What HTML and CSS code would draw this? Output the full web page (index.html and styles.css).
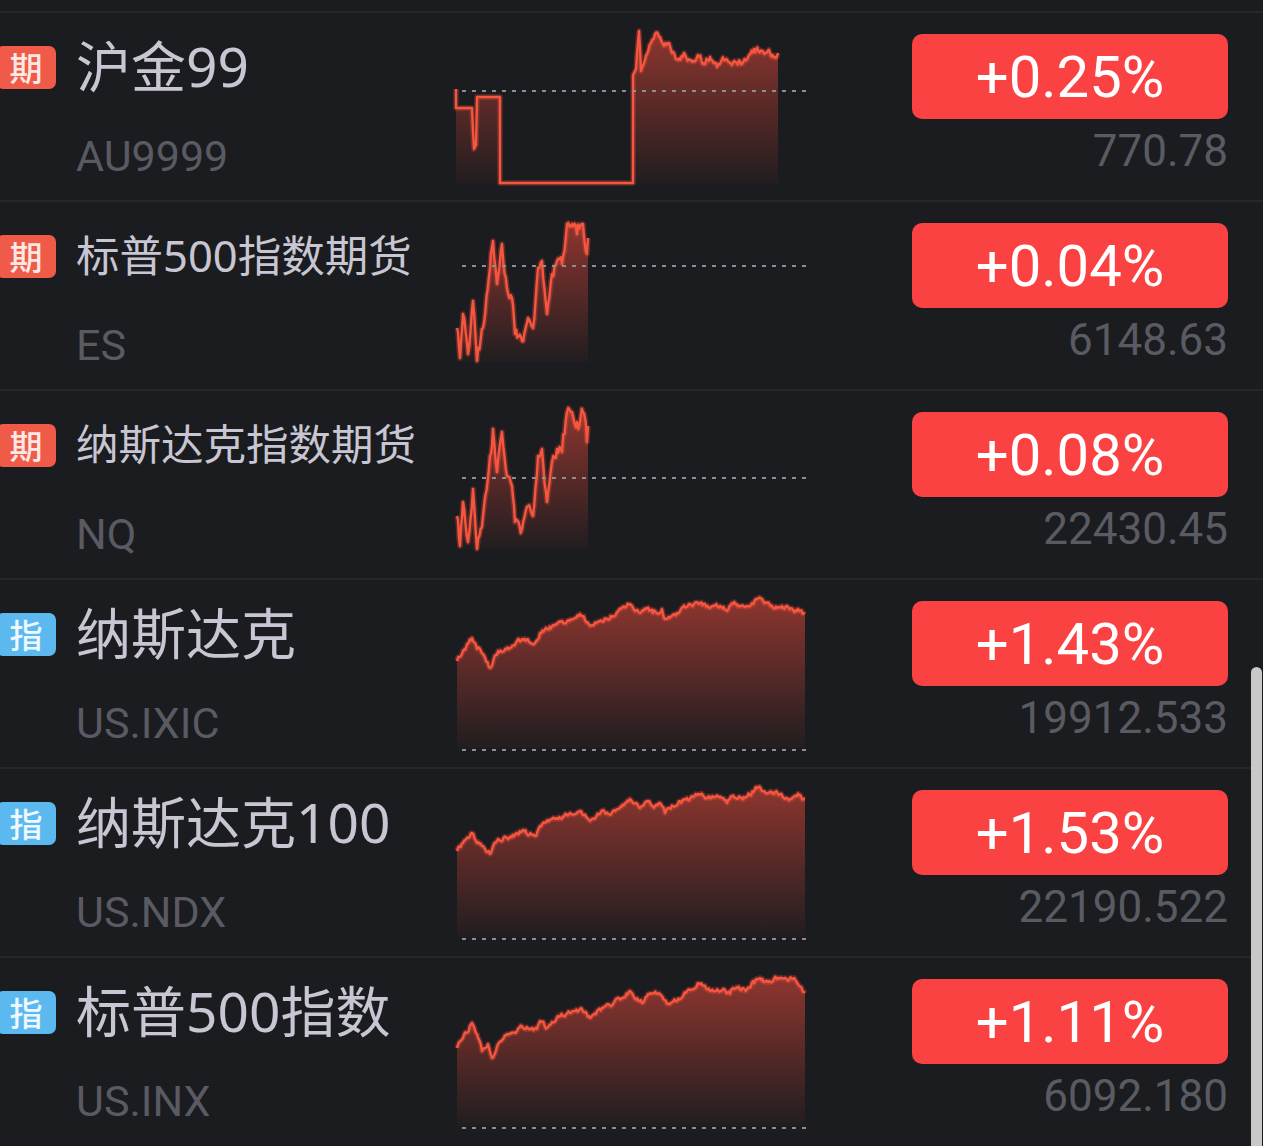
FILE: index.html
```html
<!DOCTYPE html>
<html lang="zh-CN">
<head>
  <meta charset="UTF-8" />
  <meta name="viewport" content="width=device-width, initial-scale=1.0"/>
  <title>自选</title>
  <link rel="stylesheet" href="styles.css">
</head>
<body>

  <div class="list">
    <div class="row">
      <div class="info">
        <div class="title"><span class="tag tag-fut">期</span><span class="name">沪金99</span></div>
        <div class="code">AU9999</div>
      </div>
      <div class="chart" data-chart="gold"></div>
      <div class="quote">
        <div class="change">+0.25%</div>
        <div class="price">770.78</div>
      </div>
    </div>

    <div class="row">
      <div class="info">
        <div class="title"><span class="tag tag-fut">期</span><span class="name name-mid">标普500指数期货</span></div>
        <div class="code">ES</div>
      </div>
      <div class="chart" data-chart="es"></div>
      <div class="quote">
        <div class="change">+0.04%</div>
        <div class="price">6148.63</div>
      </div>
    </div>

    <div class="row">
      <div class="info">
        <div class="title"><span class="tag tag-fut">期</span><span class="name name-long">纳斯达克指数期货</span></div>
        <div class="code">NQ</div>
      </div>
      <div class="chart" data-chart="nq"></div>
      <div class="quote">
        <div class="change">+0.08%</div>
        <div class="price">22430.45</div>
      </div>
    </div>

    <div class="row">
      <div class="info">
        <div class="title"><span class="tag tag-idx">指</span><span class="name">纳斯达克</span></div>
        <div class="code">US.IXIC</div>
      </div>
      <div class="chart" data-chart="ixic"></div>
      <div class="quote">
        <div class="change">+1.43%</div>
        <div class="price">19912.533</div>
      </div>
    </div>

    <div class="row">
      <div class="info">
        <div class="title"><span class="tag tag-idx">指</span><span class="name">纳斯达克100</span></div>
        <div class="code">US.NDX</div>
      </div>
      <div class="chart" data-chart="ndx"></div>
      <div class="quote">
        <div class="change">+1.53%</div>
        <div class="price">22190.522</div>
      </div>
    </div>

    <div class="row">
      <div class="info">
        <div class="title"><span class="tag tag-idx">指</span><span class="name">标普500指数</span></div>
        <div class="code">US.INX</div>
      </div>
      <div class="chart" data-chart="inx"></div>
      <div class="quote">
        <div class="change">+1.11%</div>
        <div class="price">6092.180</div>
      </div>
    </div>
  </div>

  <div class="scrollbar"></div>

  <script>
    // key points of each intraday line, x/y in chart pixels
    const futLine = [[7,126],[10,156],[13,112],[18,152],[23,99],[27,159],[33,126],[40,66],[43,39],[47,82],[52,42],[57,86],[62,96],[65,132],[72,139],[78,116],[83,126],[88,66],[92,59],[97,112],[102,72],[107,59],[112,62],[117,22],[122,22],[127,32],[133,22],[137,52],[138,36]];

    const charts = {
      gold: {
        base: 78, bottom: 171, amp: 6, noiseFrom: 186, seed: 11,
        points: [[6,76],[6,95],[22,95],[23,118],[24,136],[26,132],[27,84],[50,84],[50,170],[183,170],[183,62],[186,56],[189,18],[191,58],[194,50],[197,41],[201,30],[205,21],[210,24],[214,33],[218,30],[222,40],[228,47],[234,40],[240,47],[248,42],[254,50],[260,44],[266,50],[274,47],[282,52],[290,48],[298,44],[304,36],[312,38],[320,40],[326,45],[328,40]]
      },
      es: { base: 64, bottom: 160, amp: 12, noiseFrom: 0, seed: 5, points: futLine },
      nq: { base: 87, bottom: 158, amp: 12, noiseFrom: 0, seed: 7, points: futLine.map(p => [p[0], p[1] - 1]) },
      ixic: {
        base: 170, bottom: 168, amp: 4, noiseFrom: 0, seed: 21,
        points: [[7,81],[13,71],[22,58],[27,69],[33,74],[40,88],[48,71],[60,68],[72,59],[85,63],[90,53],[107,44],[117,41],[130,34],[140,46],[150,41],[163,36],[180,24],[190,33],[197,28],[203,33],[212,29],[215,39],[227,33],[240,24],[250,23],[260,28],[270,26],[277,31],[283,24],[297,26],[307,19],[317,23],[327,28],[337,26],[347,31],[355,34]]
      },
      ndx: {
        base: 170, bottom: 168, amp: 4, noiseFrom: 0, seed: 33,
        points: [[7,82],[13,74],[22,64],[27,74],[33,77],[40,85],[48,70],[57,69],[72,62],[85,67],[90,57],[107,49],[120,44],[130,42],[140,52],[150,45],[163,42],[180,30],[190,39],[197,32],[205,37],[210,34],[215,44],[223,37],[237,29],[248,25],[260,29],[268,27],[277,34],[282,27],[295,29],[307,19],[318,24],[330,25],[340,30],[347,27],[355,30]]
      },
      inx: {
        base: 170, bottom: 168, amp: 4, noiseFrom: 0, seed: 47,
        points: [[7,90],[13,80],[22,65],[27,76],[32,93],[38,86],[42,100],[48,86],[57,76],[67,73],[72,68],[87,71],[90,63],[97,70],[108,58],[123,53],[132,51],[140,60],[147,53],[163,46],[180,33],[192,45],[198,36],[210,36],[217,46],[227,43],[237,33],[250,26],[260,33],[273,31],[280,36],[283,30],[297,31],[303,23],[317,23],[330,20],[343,21],[348,26],[355,35]]
      }
    };

    function random(seed) {
      return function() {
        seed = (seed * 16807) % 2147483647;
        return (seed - 1) / 2147483646;
      };
    }

    function roughen(c) {
      const rand = random(c.seed);
      const out = [c.points[0]];
      let wobble = 0;
      for (let i = 1; i < c.points.length; i++) {
        const [x0, y0] = c.points[i - 1];
        const [x1, y1] = c.points[i];
        if (x1 - x0 < 1 || x0 < c.noiseFrom) {
          out.push([x1, y1]);
          continue;
        }
        const steps = Math.round((x1 - x0) / 1.2);
        for (let s = 1; s <= steps; s++) {
          const t = s / steps;
          wobble = wobble * 0.5 + (rand() - 0.5) * c.amp;
          out.push([x0 + (x1 - x0) * t, s === steps ? y1 : y0 + (y1 - y0) * t + wobble]);
        }
      }
      return out;
    }

    document.querySelectorAll(".chart").forEach(el => {
      const id = el.dataset.chart;
      const c = charts[id];
      const pts = roughen(c);
      const line = "M" + pts.map(p => p[0].toFixed(1) + "," + p[1].toFixed(1)).join(" L");
      const first = pts[0][0], last = pts[pts.length - 1][0];
      const area = line + ` L${last},${c.bottom} L${first},${c.bottom} Z`;
      el.innerHTML = `
        <svg width="360" height="187" viewBox="0 0 360 187">
          <defs>
            <linearGradient id="fill-${id}" x1="0" y1="0" x2="0" y2="1">
              <stop offset="0" stop-color="#e2483a" stop-opacity="0.58"/>
              <stop offset="1" stop-color="#e2483a" stop-opacity="0.03"/>
            </linearGradient>
          </defs>
          <path d="${area}" fill="url(#fill-${id})"/>
          <path d="${line}" fill="none" stroke="#f4503c" stroke-opacity="0.3" stroke-width="5.5" stroke-linejoin="round"/>
          <path d="${line}" fill="none" stroke="#f6553f" stroke-width="2.4" stroke-linejoin="round"/>
          <line x1="12" x2="356" y1="${c.base}" y2="${c.base}" stroke="#8d8e94" stroke-width="2" stroke-dasharray="4 6"/>
        </svg>`;
    });
  </script>
</body>
</html>
```

FILE: styles.css
```css
body {
  margin: 0;
  background: #1b1c1f;
  font-family: "Noto Sans CJK SC", "Noto Sans", sans-serif;
  overflow: hidden;
}

.list {
  padding-top: 11px;
}

.row {
  display: grid;
  grid-template-columns: 450px 360px 1fr;
  height: 189px;
  box-sizing: border-box;
  border-top: 2px solid #26272b;
}

.info {
  padding-top: 18px;
}

.title {
  display: flex;
  align-items: center;
  height: 70px;
}

.tag {
  width: 60px;
  height: 43px;
  margin-left: -4px;
  margin-right: 20px;
  margin-top: 2px;
  border-radius: 7px;
  display: flex;
  align-items: center;
  justify-content: center;
  font-size: 33px;
  font-weight: 500;
  color: #fde9e4;
  flex-shrink: 0;
}

.tag-fut {
  background: #ef5b48;
}

.tag-idx {
  background: #5bb9f0;
  color: #eef8ff;
}

.name {
  font-family: "Noto Sans", "Noto Sans CJK SC", sans-serif;
  font-size: 55px;
  line-height: 70px;
  color: #c7c6d2;
  white-space: nowrap;
}

.name-mid {
  font-size: 43.5px;
}

.name-long {
  font-size: 42.5px;
}

.code {
  margin-top: 25px;
  padding-left: 76px;
  font-family: Roboto, "Liberation Sans", sans-serif;
  font-size: 43px;
  line-height: 60px;
  color: #595a62;
}

.chart svg {
  display: block;
}

.quote {
  display: flex;
  flex-direction: column;
  align-items: flex-end;
  padding-top: 21px;
  padding-right: 35px;
}

.change {
  width: 316px;
  height: 85px;
  border-radius: 10px;
  background: #fb4242;
  color: #fff;
  font-family: Roboto, "Liberation Sans", sans-serif;
  font-size: 58px;
  display: flex;
  align-items: center;
  justify-content: center;
}

.price {
  margin-top: 4px;
  font-family: Roboto, "Liberation Sans", sans-serif;
  font-size: 44px;
  line-height: 56px;
  color: #5a5b62;
}

.scrollbar {
  position: fixed;
  right: 1px;
  top: 667px;
  bottom: 0;
  width: 11px;
  border-radius: 6px 6px 0 0;
  background: #c8c8c8;
}
```
